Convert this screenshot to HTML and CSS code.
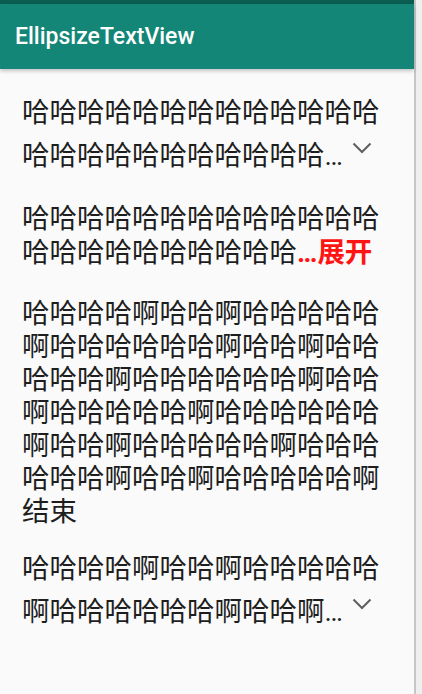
FILE: index.html
```html
<!DOCTYPE html>
<html lang="zh">
<head>
<meta charset="utf-8">
<title>EllipsizeTextView</title>
<link rel="stylesheet" href="styles.css">
</head>
<body>
<div class="screen">
  <div class="app">
    <div class="statusbar"></div>
    <header class="toolbar"><span class="title">EllipsizeTextView</span></header>
    <main class="content">
      <p class="block ellip">哈哈哈哈哈哈哈哈哈哈哈哈哈<br>哈哈哈哈哈哈哈哈哈哈哈<span class="dots">…</span><svg class="chevron" width="20" height="12" viewBox="0 0 20 12"><polyline points="1.5,1.5 10,10 18.5,1.5" fill="none" stroke="#5f5f5f" stroke-width="2"/></svg></p>
      <p class="block plain">哈哈哈哈哈哈哈哈哈哈哈哈哈<br>哈哈哈哈哈哈哈哈哈哈<span class="more"><span class="dots">…</span>展开</span></p>
      <p class="block plain">哈哈哈哈啊哈哈啊哈哈哈哈哈啊哈哈哈哈哈哈啊哈哈啊哈哈哈哈哈啊哈哈哈哈哈哈啊哈哈啊哈哈哈哈哈啊哈哈哈哈哈哈啊哈哈啊哈哈哈哈哈啊哈哈哈哈哈哈啊哈哈啊哈哈哈哈哈啊结束</p>
      <p class="block ellip">哈哈哈哈啊哈哈啊哈哈哈哈哈<br>啊哈哈哈哈哈哈啊哈哈啊<span class="dots">…</span><svg class="chevron" width="20" height="12" viewBox="0 0 20 12"><polyline points="1.5,1.5 10,10 18.5,1.5" fill="none" stroke="#5f5f5f" stroke-width="2"/></svg></p>
    </main>
  </div>
  <div class="edge"></div>
</div>
</body>
</html>
```

FILE: styles.css
```css
html, body {
  margin: 0;
  padding: 0;
  background: #f0f0f0;
}

.screen {
  display: flex;
  width: 422px;
  height: 694px;
  overflow: hidden;
}

.app {
  width: 414px;
  height: 694px;
  background: #fafafa;
  display: flex;
  flex-direction: column;
}

.edge {
  width: 8px;
  border-left: 2px solid #c6c6c6;
  background: #efefef;
  box-sizing: border-box;
}

.statusbar {
  height: 4px;
  flex: none;
  background: #0b5d52;
}

.toolbar {
  height: 65px;
  flex: none;
  background: #138677;
  display: flex;
  align-items: center;
  padding-left: 15px;
  box-shadow: 0 2px 4px rgba(0, 0, 0, 0.22);
  position: relative;
  z-index: 1;
}

.title {
  font-family: Roboto, "Liberation Sans", sans-serif;
  font-weight: 500;
  font-size: 23px;
  color: #ffffff;
}

.content {
  padding: 20px 22px 0 22px;
}

.block {
  margin: 0;
  font-family: "Noto Sans CJK SC", sans-serif;
  font-size: 27.5px;
  color: #1e1e1e;
}

.block.ellip {
  line-height: 43px;
  margin-bottom: 22px;
}

.block.plain {
  line-height: 34px;
  margin-bottom: 25px;
}

.block.plain + .block.plain {
  line-height: 33px;
  margin-bottom: 19px;
}

.dots {
  font-family: Roboto, sans-serif;
}

.more {
  color: #ff1414;
  font-weight: 700;
}

.chevron {
  display: inline-block;
  vertical-align: top;
  margin-top: 10px;
  margin-left: 9px;
}
```
